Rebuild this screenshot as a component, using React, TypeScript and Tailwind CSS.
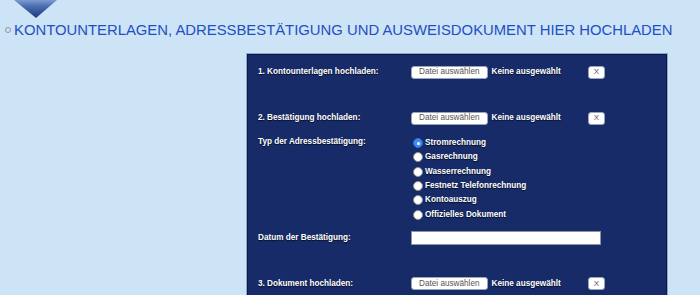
const radios = [
  'Stromrechnung',
  'Gasrechnung',
  'Wasserrechnung',
  'Festnetz Telefonrechnung',
  'Kontoauszug',
  'Offizielles Dokument',
];

const label = 'text-white font-bold text-[8.2px] leading-[14px] [text-shadow:0_1px_1px_rgba(0,0,0,0.7)]';

function FileInput() {
  return (
    <div className="flex items-center">
      <div className="flex items-center w-[177px]">
        <span className="h-[13px] px-[7px] flex items-center rounded-[3px] bg-white border border-[#9aa3b8] text-[#555] text-[8.2px] leading-none">
          Datei auswählen
        </span>
        <span className={`${label} ml-[4px]`}>Keine ausgewählt</span>
      </div>
      <span className="h-[13px] w-[17px] flex items-center justify-center rounded-[3px] bg-white border border-[#9aa3b8] text-[#555] text-[8px] leading-none">
        X
      </span>
    </div>
  );
}

function Row({ title, children, className = '' }: { title: string; children: React.ReactNode; className?: string }) {
  return (
    <div className={`grid grid-cols-[153px_1fr] ${className}`}>
      <div className={label}>{title}</div>
      <div>{children}</div>
    </div>
  );
}

export default function App() {
  return (
    <div className="h-[295px] overflow-hidden bg-[#cde3f6] font-['Liberation_Sans',Arial,sans-serif]">
      <svg width="60" height="19" viewBox="0 0 60 19" className="block">
        <defs>
          <linearGradient id="arr" x1="0" y1="0" x2="0" y2="1">
            <stop offset="0" stopColor="#7f9bd0" />
            <stop offset="0.35" stopColor="#4a6cb0" />
            <stop offset="1" stopColor="#1b3a82" />
          </linearGradient>
        </defs>
        <path d="M14 0 L57 0 L36 18 Z" fill="url(#arr)" />
      </svg>

      <div className="flex items-center h-[24px] -mt-[1px]">
        <span className="ml-[5px] w-[6px] h-[6px] rounded-full border border-[#8a96a8]" />
        <h1 className="ml-[3px] text-[14.85px] leading-none text-[#1f50c2]">
          KONTOUNTERLAGEN, ADRESSBESTÄTIGUNG UND AUSWEISDOKUMENT HIER HOCHLADEN
        </h1>
      </div>

      <div className="ml-[246px] mt-[11px] w-[422px] border border-[#8ea6d2]">
        <div className="border border-[#0c1846] bg-[#172b69] pl-[10px] pt-[10px] pb-[20px]">
          <Row title="1. Kontounterlagen hochladen:">
            <FileInput />
          </Row>
          <Row title="2. Bestätigung hochladen:" className="mt-[32px]">
            <FileInput />
          </Row>
          <Row title="Typ der Adressbestätigung:" className="mt-[10px]">
            <div className="flex flex-col mt-[1px]">
              {radios.map((r, i) => (
                <div key={r} className="flex items-center h-[14.3px] pl-[2px]">
                  {i === 0 ? (
                    <span className="w-[10px] h-[10px] rounded-full bg-[#3b8cf5] border border-[#2f6fd1] flex items-center justify-center">
                      <span className="w-[3px] h-[3px] rounded-full bg-white" />
                    </span>
                  ) : (
                    <span className="w-[10px] h-[10px] rounded-full bg-white border border-[#8c8c8c]" />
                  )}
                  <span className={`${label} ml-[2px]`}>{r}</span>
                </div>
              ))}
            </div>
          </Row>
          <Row title="Datum der Bestätigung:" className="mt-[9px]">
            <div className="w-[190px] h-[14px] bg-white border border-[#8c93a6]" />
          </Row>
          <Row title="3. Dokument hochladen:" className="mt-[32px]">
            <FileInput />
          </Row>
        </div>
      </div>
    </div>
  );
}
